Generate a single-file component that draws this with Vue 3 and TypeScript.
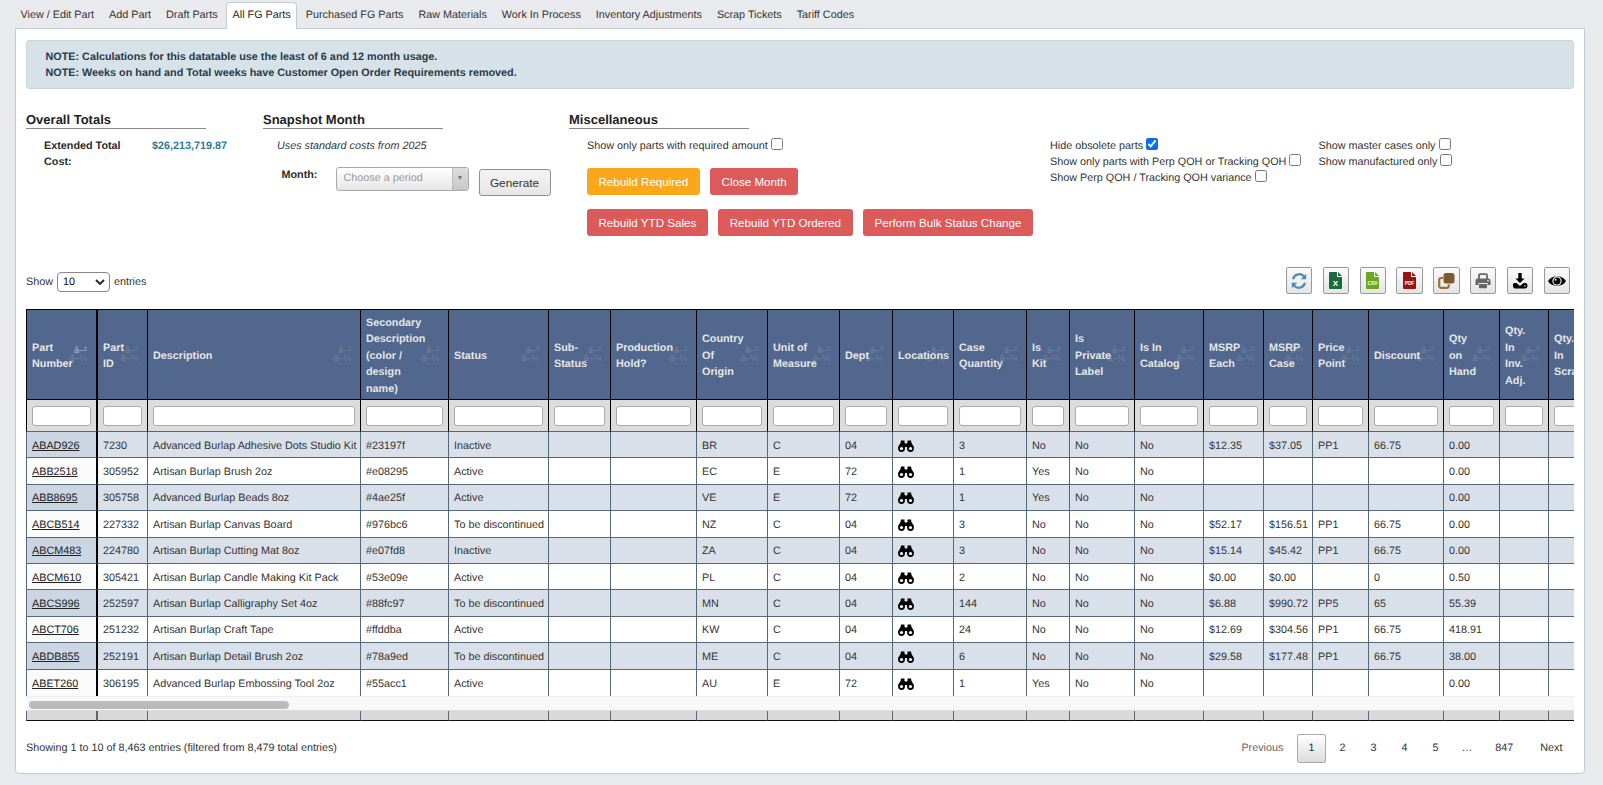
<script setup lang="ts">
const tabs: string[] = ['View / Edit Part', 'Add Part', 'Draft Parts', 'All FG Parts', 'Purchased FG Parts', 'Raw Materials', 'Work In Process', 'Inventory Adjustments', 'Scrap Tickets', 'Tariff Codes']
const colWidths: number[] = [70, 51, 213, 88, 100, 62, 86, 71, 72, 53, 61, 73, 43, 65, 69, 60, 49, 56, 75, 56, 49, 60]
const headers: string[][] = [
  ['Part', 'Number'], ['Part', 'ID'], ['Description'], ['Secondary', 'Description', '(color /', 'design', 'name)'], ['Status'],
  ['Sub-', 'Status'], ['Production', 'Hold?'], ['Country', 'Of', 'Origin'], ['Unit of', 'Measure'], ['Dept'], ['Locations'],
  ['Case', 'Quantity'], ['Is', 'Kit'], ['Is', 'Private', 'Label'], ['Is In', 'Catalog'], ['MSRP', 'Each'], ['MSRP', 'Case'],
  ['Price', 'Point'], ['Discount'], ['Qty', 'on', 'Hand'], ['Qty.', 'In', 'Inv.', 'Adj.'], ['Qty.', 'In', 'Scrap']
]
const rows: string[][] = [
  ['ABAD926', '7230', 'Advanced Burlap Adhesive Dots Studio Kit', '#23197f', 'Inactive', '', '', 'BR', 'C', '04', '@', '3', 'No', 'No', 'No', '$12.35', '$37.05', 'PP1', '66.75', '0.00', '', ''],
  ['ABB2518', '305952', 'Artisan Burlap Brush 2oz', '#e08295', 'Active', '', '', 'EC', 'E', '72', '@', '1', 'Yes', 'No', 'No', '', '', '', '', '0.00', '', ''],
  ['ABB8695', '305758', 'Advanced Burlap Beads 8oz', '#4ae25f', 'Active', '', '', 'VE', 'E', '72', '@', '1', 'Yes', 'No', 'No', '', '', '', '', '0.00', '', ''],
  ['ABCB514', '227332', 'Artisan Burlap Canvas Board', '#976bc6', 'To be discontinued', '', '', 'NZ', 'C', '04', '@', '3', 'No', 'No', 'No', '$52.17', '$156.51', 'PP1', '66.75', '0.00', '', ''],
  ['ABCM483', '224780', 'Artisan Burlap Cutting Mat 8oz', '#e07fd8', 'Inactive', '', '', 'ZA', 'C', '04', '@', '3', 'No', 'No', 'No', '$15.14', '$45.42', 'PP1', '66.75', '0.00', '', ''],
  ['ABCM610', '305421', 'Artisan Burlap Candle Making Kit Pack', '#53e09e', 'Active', '', '', 'PL', 'C', '04', '@', '2', 'No', 'No', 'No', '$0.00', '$0.00', '', '0', '0.50', '', ''],
  ['ABCS996', '252597', 'Artisan Burlap Calligraphy Set 4oz', '#88fc97', 'To be discontinued', '', '', 'MN', 'C', '04', '@', '144', 'No', 'No', 'No', '$6.88', '$990.72', 'PP5', '65', '55.39', '', ''],
  ['ABCT706', '251232', 'Artisan Burlap Craft Tape', '#ffddba', 'Active', '', '', 'KW', 'C', '04', '@', '24', 'No', 'No', 'No', '$12.69', '$304.56', 'PP1', '66.75', '418.91', '', ''],
  ['ABDB855', '252191', 'Artisan Burlap Detail Brush 2oz', '#78a9ed', 'To be discontinued', '', '', 'ME', 'C', '04', '@', '6', 'No', 'No', 'No', '$29.58', '$177.48', 'PP1', '66.75', '38.00', '', ''],
  ['ABET260', '306195', 'Advanced Burlap Embossing Tool 2oz', '#55acc1', 'Active', '', '', 'AU', 'E', '72', '@', '1', 'Yes', 'No', 'No', '', '', '', '', '0.00', '', '']
]
const pages: string[] = ['2', '3', '4', '5']
</script>

<template>
  <div class="page">
    <nav class="tabs">
      <a v-for="t in tabs" :key="t" class="tab" :class="{ active: t === 'All FG Parts' }">{{ t }}</a>
    </nav>
    <main class="card">
      <div class="alert">
        <div>NOTE: Calculations for this datatable use the least of 6 and 12 month usage.</div>
        <div>NOTE: Weeks on hand and Total weeks have Customer Open Order Requirements removed.</div>
      </div>

      <section class="panels">
        <div>
          <h3 class="heading">Overall Totals</h3>
          <div class="totals">
            <b class="total-label">Extended Total Cost:</b>
            <b class="total-value">$26,213,719.87</b>
          </div>
        </div>
        <div>
          <h3 class="heading">Snapshot Month</h3>
          <div class="snapshot-note">Uses standard costs from 2025</div>
          <div class="snapshot-row">
            <b class="month-label">Month:</b>
            <div class="chosen">
              <span class="chosen-text">Choose a period</span>
              <span class="chosen-arrow">▼</span>
            </div>
            <button class="generate">Generate</button>
          </div>
        </div>
        <div>
          <h3 class="heading">Miscellaneous</h3>
          <div class="misc">
            <label class="opt">Show only parts with required amount<input type="checkbox" /></label>
            <div class="btn-row first">
              <button class="act orange">Rebuild Required</button>
              <button class="act red">Close Month</button>
            </div>
            <div class="btn-row">
              <button class="act red">Rebuild YTD Sales</button>
              <button class="act red">Rebuild YTD Ordered</button>
              <button class="act red">Perform Bulk Status Change</button>
            </div>
          </div>
        </div>
        <div class="options">
          <div class="opt-col wide">
            <label class="opt">Hide obsolete parts<input type="checkbox" checked /></label>
            <label class="opt">Show only parts with Perp QOH or Tracking QOH<input type="checkbox" /></label>
            <label class="opt">Show Perp QOH / Tracking QOH variance<input type="checkbox" /></label>
          </div>
          <div class="opt-col">
            <label class="opt">Show master cases only<input type="checkbox" /></label>
            <label class="opt">Show manufactured only<input type="checkbox" /></label>
          </div>
        </div>
      </section>

      <div class="controls">
        <div class="length">
          <span>Show</span>
          <div class="length-select">
            <span>10</span>
            <svg width="10" height="6" viewBox="0 0 10 6"><path d="M1 1l4 4 4-4" fill="none" stroke="#222" stroke-width="1.8" /></svg>
          </div>
          <span>entries</span>
        </div>
        <div class="tools">
          <button class="tool" title="Refresh">
            <svg width="16" height="16" viewBox="0 0 16 16" fill="#4a8bb0">
              <path d="M13.5 2.5L15.2 .8V6.2H9.8L12 4A5.2 5.2 0 0 0 3.2 6.2H1A7.2 7.2 0 0 1 13.5 2.5z" />
              <path d="M2.5 13.5L.8 15.2V9.8H6.2L4 12A5.2 5.2 0 0 0 12.8 9.8H15A7.2 7.2 0 0 1 2.5 13.5z" />
            </svg>
          </button>
          <button class="tool" title="Excel">
            <svg width="13" height="17" viewBox="0 0 13 17">
              <path d="M1 0h7v5h5v11a1 1 0 0 1-1 1H1a1 1 0 0 1-1-1V1a1 1 0 0 1 1-1z" fill="#1c6b3e" /><path d="M9 0l4 4H9z" fill="#1c6b3e" />
              <text x="6.5" y="14" text-anchor="middle" class="file-text big">X</text>
            </svg>
          </button>
          <button class="tool" title="CSV">
            <svg width="13" height="17" viewBox="0 0 13 17">
              <path d="M1 0h7v5h5v11a1 1 0 0 1-1 1H1a1 1 0 0 1-1-1V1a1 1 0 0 1 1-1z" fill="#6ba81c" /><path d="M9 0l4 4H9z" fill="#6ba81c" />
              <text x="6.5" y="12.5" text-anchor="middle" class="file-text">CSV</text>
            </svg>
          </button>
          <button class="tool" title="PDF">
            <svg width="13" height="17" viewBox="0 0 13 17">
              <path d="M1 0h7v5h5v11a1 1 0 0 1-1 1H1a1 1 0 0 1-1-1V1a1 1 0 0 1 1-1z" fill="#9c1212" /><path d="M9 0l4 4H9z" fill="#9c1212" />
              <text x="6.5" y="12.5" text-anchor="middle" class="file-text">PDF</text>
            </svg>
          </button>
          <button class="tool" title="Copy">
            <svg width="17" height="17" viewBox="0 0 17 17">
              <path d="M5 6H3A1.8 1.8 0 0 0 1.2 7.8V14A1.8 1.8 0 0 0 3 15.8H9A1.8 1.8 0 0 0 10.8 14V12.5" fill="none" stroke="#99733f" stroke-width="2.2" />
              <rect x="5.5" y="1" width="11" height="10.5" rx="2.5" fill="#7f5a2e" />
            </svg>
          </button>
          <button class="tool" title="Print">
            <svg width="16" height="16" viewBox="0 0 16 16">
              <path d="M4 6V2.2A1 1 0 0 1 5 1.2H11A1 1 0 0 1 12 2.2V6" fill="none" stroke="#666" stroke-width="1.8" />
              <path d="M2.5 5.5H13.5A2 2 0 0 1 15.5 7.5V12H12.5V10H3.5V12H.5V7.5A2 2 0 0 1 2.5 5.5z" fill="#666" />
              <rect x="4" y="11" width="8" height="4.2" rx=".8" fill="#666" />
              <circle cx="13" cy="7.8" r=".8" fill="#fff" />
            </svg>
          </button>
          <button class="tool" title="Download">
            <svg width="16" height="16" viewBox="0 0 16 16" fill="#000">
              <path d="M6.3 0H9.7V5.5H12.5L8 10L3.5 5.5H6.3z" />
              <path d="M1 11.5C1 10.5 2 10 3 10H4.5L8 13L11.5 10H13C14.8 10 15.5 11 15.5 12.5C15.5 14.5 14.5 15.5 13 15.5H3C1.5 15.5 1 14 1 11.5z" />
              <circle cx="13" cy="13" r=".7" fill="#fff" />
            </svg>
          </button>
          <button class="tool" title="Columns">
            <svg width="18" height="14" viewBox="0 0 18 14">
              <path d="M0 7C3.5 .5 14.5 .5 18 7C14.5 13.5 3.5 13.5 0 7z" fill="#000" />
              <circle cx="9" cy="7" r="4.7" fill="#eee" />
              <circle cx="9" cy="7" r="3.5" fill="#000" />
              <circle cx="7.6" cy="5.7" r="1" fill="#eee" />
            </svg>
          </button>
        </div>
      </div>

      <div class="grid-wrap">
        <table class="grid">
          <colgroup><col v-for="(w, i) in colWidths" :key="i" :style="{ width: w + 'px' }" /></colgroup>
          <thead>
            <tr class="head-row">
              <th v-for="(h, i) in headers" :key="i">
                <template v-for="(line, j) in h" :key="j"><br v-if="j > 0" />{{ line }}</template>
                <span class="sort"><span :class="{ on: i === 0 }">â–²</span><span>â–¼</span></span>
              </th>
            </tr>
            <tr class="filter-row">
              <td v-for="(_, i) in headers" :key="i"><input class="filter" type="text" /></td>
            </tr>
          </thead>
          <tbody>
            <tr v-for="(r, ri) in rows" :key="r[0]" class="data-row" :class="ri % 2 === 0 ? 'odd' : 'even'">
              <td v-for="(c, ci) in r" :key="ci">
                <a v-if="ci === 0" class="part-link">{{ c }}</a>
                <svg v-else-if="c === '@'" class="bino" width="16" height="12" viewBox="0 0 16 12" fill="#000">
                  <path d="M3 .5H6.5V3H7V8H.3C.3 6.5 1.5 4.5 2.5 3z" />
                  <path d="M13 .5H9.5V3H9V8H15.7C15.7 6.5 14.5 4.5 13.5 3z" />
                  <rect x="6" y="3.5" width="4" height="3.5" />
                  <circle cx="3.5" cy="8.5" r="3.4" /><circle cx="12.5" cy="8.5" r="3.4" />
                  <circle cx="3.5" cy="8.5" r="1.6" fill="#fff" /><circle cx="12.5" cy="8.5" r="1.6" fill="#fff" />
                </svg>
                <template v-else>{{ c }}</template>
              </td>
            </tr>
          </tbody>
        </table>
        <div class="scroll-strip"><div class="scroll-thumb"></div></div>
        <table class="grid foot">
          <colgroup><col v-for="(w, i) in colWidths" :key="i" :style="{ width: w + 'px' }" /></colgroup>
          <tfoot><tr><td v-for="(_, i) in headers" :key="i"></td></tr></tfoot>
        </table>
      </div>

      <div class="bottom">
        <div class="info">Showing 1 to 10 of 8,463 entries (filtered from 8,479 total entries)</div>
        <div class="pager">
          <a class="pg muted">Previous</a>
          <a class="pg current">1</a>
          <a v-for="p in pages" :key="p" class="pg">{{ p }}</a>
          <span class="pg dots">…</span>
          <a class="pg">847</a>
          <a class="pg next">Next</a>
        </div>
      </div>
    </main>
  </div>
</template>

<style>
html, body { margin: 0; background: #e8eaee; }
</style>

<style scoped>
.page {
  height: 785px;
  overflow: hidden;
  box-sizing: border-box;
  padding: 2px 18px 0 14px;
  background: #e8eaee;
  font: 10.8px/16px "Liberation Sans", Arial, sans-serif;
  text-rendering: geometricPrecision;
  color: #333;
}
.tabs { display: flex; height: 26px; position: relative; z-index: 1; }
.tab {
  box-sizing: border-box;
  height: 27px;
  padding: 5px 5.5px 0;
  margin-right: 1.95px;
  border: 1px solid transparent;
  border-bottom: 0;
  border-radius: 4px 4px 0 0;
  white-space: nowrap;
  line-height: 15px;
}
.tab.active { background: #fff; border-color: #c3cad6; color: #222; }
.card {
  box-sizing: border-box;
  height: 746px;
  margin-left: .5px;
  padding: 11px 10px 0 10.5px;
  background: #fff;
  border: 1px solid #c3cad6;
  border-radius: 0 0 4px 4px;
}
.alert {
  height: 49px;
  box-sizing: border-box;
  padding: 8px 18.5px;
  background: #d6e2e8;
  border: 1px solid #c5d5dc;
  border-radius: 3px;
  color: #28394a;
  font-weight: bold;
}
.panels {
  display: grid;
  grid-template-columns: 237px 306px 481px 1fr;
  height: 156px;
  margin-top: 22px;
}
.heading {
  width: 180px;
  height: 18px;
  box-sizing: border-box;
  margin: 0 0 9px;
  border-bottom: 1px solid #8a8a8a;
  font-size: 13px;
  line-height: 18px;
  font-weight: bold;
  color: #222;
}
.totals { display: flex; padding-left: 18px; }
.total-label { width: 108px; padding-right: 14px; box-sizing: border-box; color: #2b2b2b; }
.total-value { color: #2f7ba0; }
.snapshot-note { padding-left: 14px; font-style: italic; }
.snapshot-row { display: flex; align-items: flex-start; margin-top: 13px; padding-left: 18.5px; }
.month-label { width: 54px; color: #2b2b2b; }
.chosen {
  display: flex;
  box-sizing: border-box;
  width: 133px;
  height: 24px;
  border: 1px solid #aaa;
  border-radius: 3px;
  background: linear-gradient(#fff, #e6e6e6);
  color: #999;
  line-height: 20px;
}
.chosen-text { flex: 1; padding-left: 7px; }
.chosen-arrow {
  width: 15px;
  border-left: 1px solid #bbb;
  background: linear-gradient(#ddd, #c8c8c8);
  color: #777;
  font-size: 7px;
  text-align: center;
  line-height: 22px;
}
.generate {
  width: 72px;
  height: 27px;
  margin: 2px 0 0 10px;
  padding: 0;
  border: 1px solid #8f8f8f;
  border-radius: 3px;
  background: linear-gradient(#f4f4f4, #e6e6e6);
  color: #333;
  font: 11.8px "Liberation Sans", Arial, sans-serif;
}
.misc { padding-left: 18px; }
.opt { display: block; white-space: nowrap; height: 16px; }
.opt input {
  width: 12px;
  height: 12px;
  margin: 0 0 0 3px;
  vertical-align: top;
  accent-color: #0b6cf5;
}
.btn-row { display: flex; gap: 10.5px; margin-top: 14px; }
.act {
  height: 27px;
  padding: 0 10.5px;
  border: 1px solid transparent;
  border-radius: 3px;
  color: #fff;
  font: 11.6px "Liberation Sans", Arial, sans-serif;
  white-space: nowrap;
}
.orange { background: #fba71b; }
.red { background: #dc5a5a; }
.options { display: flex; padding-top: 27px; }
.opt-col { width: 150px; }
.opt-col.wide { width: 268.5px; }
.controls { display: flex; justify-content: space-between; align-items: center; height: 27px; }
.length { display: flex; align-items: center; gap: 4px; margin-top: 3px; }
.length-select {
  display: flex;
  align-items: center;
  justify-content: space-between;
  box-sizing: border-box;
  width: 53px;
  height: 20px;
  padding: 0 4px 0 5px;
  border: 1px solid #888;
  border-radius: 4px;
  background: #fff;
  color: #111;
}
.tools { display: flex; gap: 10.3px; padding-right: 4px; }
.tool {
  display: flex;
  align-items: center;
  justify-content: center;
  box-sizing: border-box;
  width: 26.5px;
  height: 27px;
  padding: 0;
  border: 1px solid #999;
  border-radius: 2px;
  background: linear-gradient(#fbfbfb, #e4e4e4);
}
.file-text { fill: #fff; font: bold 4.8px "Liberation Sans", Arial, sans-serif; }
.file-text.big { font-size: 8px; }
.grid-wrap { width: 1548px; margin-top: 15px; overflow: hidden; }
.grid {
  width: 1582px;
  table-layout: fixed;
  border-collapse: separate;
  border-spacing: 0;
  border-top: 1px solid #000;
}
.grid th, .grid td { box-sizing: border-box; padding: 0 5px; border-left: 1px solid #000; overflow: visible; }
.grid th:nth-child(2), .filter-row td:nth-child(2), .foot td:nth-child(2) { border-left-width: 2px; }
.head-row { height: 90px; }
.head-row th {
  position: relative;
  background: #52678e;
  border-bottom: 1px solid #000;
  padding-top: 3px;
  color: #e6e6e6;
  font-weight: bold;
  text-align: left;
  vertical-align: middle;
  line-height: 16.5px;
}
.sort {
  position: absolute;
  right: 9px;
  top: 50%;
  display: flex;
  flex-direction: column;
  align-items: flex-end;
  margin-top: -9px;
  color: rgba(255, 255, 255, .2);
  font-size: 9px;
  font-weight: normal;
  line-height: 8px;
}
.sort .on { color: rgba(255, 255, 255, .55); }
.filter-row { height: 32px; }
.filter-row td { background: #dcdcdc; border-bottom: 1px solid #55687a; padding-top: 1px; }
.filter {
  display: block;
  box-sizing: border-box;
  width: 100%;
  height: 20px;
  padding: 0 3px;
  border: 1px solid #aaa;
  border-radius: 3px;
  background: #fff;
}
.data-row { height: 26.4px; }
.data-row td { padding-top: 2px; border-left-color: #55687a; border-bottom: 1px solid #55687a; white-space: nowrap; overflow: hidden; }
.data-row td:nth-child(2) { border-left: 2px solid #000; }
.data-row:last-child td { border-bottom: 0; }
.odd td { background: #d9e0ea; }
.even td { background: #fff; }
.odd td:first-child { background: #ccd5e2; }
.even td:first-child { background: #fafafa; }
.part-link { color: #222; text-decoration: underline; }
.bino { display: block; }
.scroll-strip { height: 15px; background: #f8f8f8; box-sizing: border-box; padding: 4px 0 0 3px; border-top: 1px solid #eee; border-bottom: 1px solid #ddd; }
.scroll-thumb { width: 260px; height: 8px; border-radius: 4px; background: #bbb; }
.foot { border-top: 0; }
.foot td { height: 10px; background: #d9d9d9; border-left-color: #55687a; border-bottom: 1px solid #111; padding: 0; }
.bottom { display: flex; justify-content: space-between; align-items: center; height: 29px; margin-top: 13px; }
.pager { display: flex; gap: 2px; }
.pg { box-sizing: border-box; height: 29px; padding: 0 11.5px; line-height: 29px; color: #333; }
.pg.next { padding-left: 13.5px; }
.muted { color: #666; }
.current {
  width: 29px;
  padding: 0;
  text-align: center;
  border: 1px solid #aaa;
  border-radius: 2px;
  line-height: 27px;
  background: linear-gradient(#fff, #dcdcdc);
}
.dots { padding: 0 9.5px; }
</style>
